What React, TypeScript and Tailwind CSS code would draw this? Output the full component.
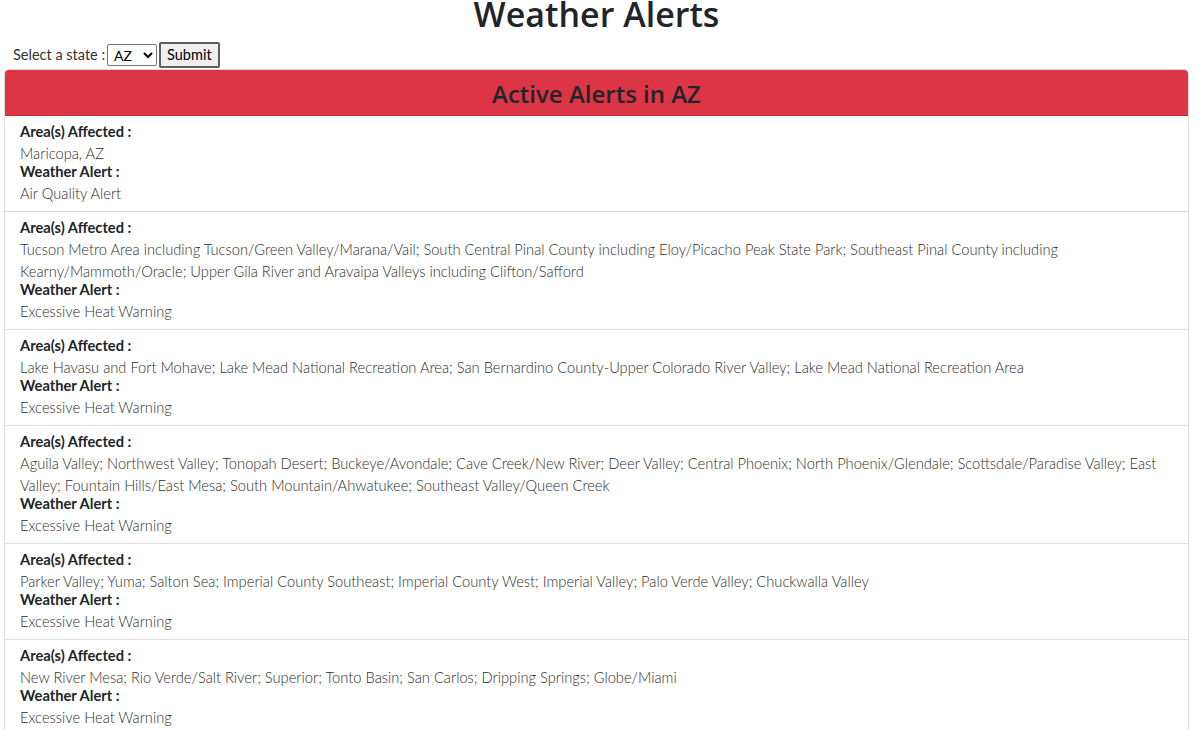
import { useState } from "react"

const alerts = [
  { area: "Maricopa, AZ", event: "Air Quality Alert" },
  {
    area: "Tucson Metro Area including Tucson/Green Valley/Marana/Vail; South Central Pinal County including Eloy/Picacho Peak State Park; Southeast Pinal County including Kearny/Mammoth/Oracle; Upper Gila River and Aravaipa Valleys including Clifton/Safford",
    event: "Excessive Heat Warning",
  },
  {
    area: "Lake Havasu and Fort Mohave; Lake Mead National Recreation Area; San Bernardino County-Upper Colorado River Valley; Lake Mead National Recreation Area",
    event: "Excessive Heat Warning",
  },
  {
    area: "Aguila Valley; Northwest Valley; Tonopah Desert; Buckeye/Avondale; Cave Creek/New River; Deer Valley; Central Phoenix; North Phoenix/Glendale; Scottsdale/Paradise Valley; East Valley; Fountain Hills/East Mesa; South Mountain/Ahwatukee; Southeast Valley/Queen Creek",
    event: "Excessive Heat Warning",
  },
  {
    area: "Parker Valley; Yuma; Salton Sea; Imperial County Southeast; Imperial County West; Imperial Valley; Palo Verde Valley; Chuckwalla Valley",
    event: "Excessive Heat Warning",
  },
  {
    area: "New River Mesa; Rio Verde/Salt River; Superior; Tonto Basin; San Carlos; Dripping Springs; Globe/Miami",
    event: "Excessive Heat Warning",
  },
]

function AlertItem({ area, event }: { area: string; event: string }) {
  return (
    <li className="border-t border-[#dfdfdf] px-[15px] pt-2 pb-[7px] first:border-t-0">
      <div className="font-bold leading-[14px] text-[#212529]">Area(s) Affected :</div>
      <div className="mt-1 font-light leading-[22px] text-[#2e2e2e]">{area}</div>
      <div className="font-bold leading-[14px] text-[#212529]">Weather Alert :</div>
      <div className="mt-1 font-light leading-[22px] text-[#2e2e2e]">{event}</div>
    </li>
  )
}

export default function App() {
  const [state, setState] = useState("AZ")

  return (
    <div
      className="h-[730px] overflow-hidden bg-white text-[14.7px] text-[#212529]"
      style={{ fontFamily: "Lato, 'Noto Sans', sans-serif" }}
    >
      <div className="w-[1193px]">
        <h1 className="text-center font-['Open_Sans',sans-serif] text-[34px] font-semibold leading-[28px] text-[#212529]">
          Weather Alerts
        </h1>

        {/* state picker */}
        <form
          className="mt-[14px] flex items-center pl-[13px]"
          onSubmit={(e) => e.preventDefault()}
        >
          <label className="mr-[2px] text-[14.5px] text-[#333]">Select a state :</label>
          <select
            value={state}
            onChange={(e) => setState(e.target.value)}
            className="h-[22px] w-[50px] rounded-[2px] border border-[#767676] bg-white px-[2px] text-[14px] text-black"
          >
            <option>AZ</option>
            <option>CA</option>
            <option>NV</option>
          </select>
          <button
            type="submit"
            className="ml-[2px] h-[26px] rounded-[2px] border-2 border-[#5f5f5f] bg-[#efefef] px-[6px] text-[14.5px] text-black"
          >
            Submit
          </button>
        </form>

        <div className="mx-1 mt-[1px] overflow-hidden rounded-[5px] border border-[#d9d9d9]">
          <div className="flex h-[46px] items-center justify-center border-b border-[#c32d3b] bg-[#dc3545] pt-[3px]">
            <h2 className="font-['Open_Sans',sans-serif] text-[24px] font-semibold text-[#212529]">
              Active Alerts in {state}
            </h2>
          </div>
          <ul>
            {alerts.map((a, i) => (
              <AlertItem key={i} area={a.area} event={a.event} />
            ))}
          </ul>
        </div>
      </div>
    </div>
  )
}
